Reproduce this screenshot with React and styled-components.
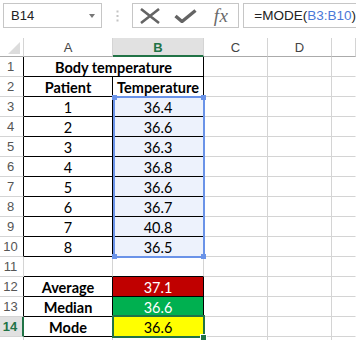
import React from "react";
import styled, { createGlobalStyle } from "styled-components";

const GlobalStyle = createGlobalStyle`
  html, body {
    margin: 0;
    padding: 0;
    background: #ffffff;
    overflow: hidden;
  }
  body {
    font-family: "Liberation Sans", Arial, sans-serif;
  }
`;

const GRID = "#d4d4d4";
const GREEN = "#217346";
const BLUE = "#6a93e8";

const Page = styled.div`
  width: 356px;
  height: 340px;
  overflow: hidden;
  background: #fff;
`;

const Toolbar = styled.div`
  height: 38px;
  display: flex;
  align-items: flex-start;
  padding-top: 3px;
  box-sizing: border-box;
`;

const NameBox = styled.div`
  margin-left: 3px;
  width: 102px;
  height: 25px;
  box-sizing: border-box;
  border: 1px solid #c6c6c6;
  display: flex;
  align-items: center;
  justify-content: space-between;
  padding: 0 6px 0 7px;
  font-size: 13px;
  color: #222;
`;

const Arrow = styled.span`
  width: 0;
  height: 0;
  border-left: 3.5px solid transparent;
  border-right: 3.5px solid transparent;
  border-top: 4px solid #777;
`;

const Dots = styled.div`
  width: 31px;
  height: 25px;
  display: flex;
  align-items: center;
  justify-content: center;
`;

const IconBox = styled.div`
  width: 111px;
  height: 25px;
  box-sizing: border-box;
  border: 1px solid #c6c6c6;
  display: flex;
  align-items: center;
`;

const IconSlot = styled.div`
  width: ${(p) => p.$w}px;
  height: 23px;
  display: flex;
  align-items: center;
  justify-content: center;
`;

const Fx = styled.span`
  font-family: "Liberation Serif", "Times New Roman", serif;
  font-style: italic;
  font-size: 19px;
  color: #6a6a6a;
  letter-spacing: 0.5px;
`;

const FormulaBox = styled.div`
  margin-left: 4px;
  flex: 1;
  height: 25px;
  box-sizing: border-box;
  border: 1px solid #c6c6c6;
  border-right: none;
  display: flex;
  align-items: center;
  padding-left: 10px;
  font-size: 13.5px;
  color: #222;
  white-space: nowrap;
`;

const Ref = styled.span`
  color: #4a78d8;
`;

const Sheet = styled.div`
  display: grid;
  grid-template-columns: 24px 89px 91px 64px 64px 1fr;
  grid-template-rows: 19px repeat(15, 20px);
  font-family: Lato, "Liberation Sans", sans-serif;
`;

const Corner = styled.div`
  grid-row: 1;
  grid-column: 1;
  border-right: 1px solid ${GRID};
  border-bottom: 1px solid #ababab;
  position: relative;
  &::after {
    content: "";
    position: absolute;
    right: 3px;
    bottom: 2px;
    width: 0;
    height: 0;
    border-left: 12px solid transparent;
    border-bottom: 12px solid #dcdcdc;
  }
`;

const ColHead = styled.div`
  grid-row: 1;
  grid-column: ${(p) => p.$c};
  box-sizing: border-box;
  border-right: 1px solid ${GRID};
  border-bottom: ${(p) => (p.$active ? `2px solid ${GREEN}` : "1px solid #ababab")};
  background: ${(p) => (p.$active ? "#e1e1e1" : "#fff")};
  color: ${(p) => (p.$active ? GREEN : "#444")};
  font-family: "Liberation Sans", Arial, sans-serif;
  font-weight: ${(p) => (p.$active ? 700 : 400)};
  font-size: 13px;
  display: flex;
  align-items: center;
  justify-content: center;
  padding-top: ${(p) => (p.$active ? "1px" : "0")};
`;

const RowHead = styled.div`
  grid-row: ${(p) => p.$r};
  grid-column: 1;
  box-sizing: border-box;
  border-right: ${(p) => (p.$active ? `2px solid ${GREEN}` : `1px solid ${p.$edge}`)};
  border-bottom: 1px solid ${GRID};
  background: ${(p) => (p.$active ? "#e1e1e1" : "#fff")};
  color: ${(p) => (p.$active ? GREEN : "#555")};
  font-family: "Liberation Sans", Arial, sans-serif;
  font-weight: ${(p) => (p.$active ? 700 : 400)};
  font-size: 13px;
  display: flex;
  align-items: center;
  justify-content: center;
  padding-right: 2px;
`;

const Cell = styled.div`
  grid-row: ${(p) => p.$r};
  grid-column: ${(p) => (p.$span ? `${p.$c} / span ${p.$span}` : p.$c)};
  box-sizing: border-box;
  border-right: 1px solid ${(p) => p.$right || GRID};
  border-bottom: 1px solid ${(p) => p.$bottom || GRID};
  background: ${(p) => p.$bg || "#fff"};
  color: ${(p) => p.$color || "#000"};
  font-weight: ${(p) => (p.$bold ? 700 : 400)};
  font-size: 14.5px;
  display: flex;
  align-items: center;
  justify-content: center;
  white-space: nowrap;
  overflow: hidden;
  padding-top: 1px;
`;

const Selection = styled.div`
  grid-column: 3;
  grid-row: 4 / 12;
  margin: -1px -1px -1px 0;
  border: 2px solid ${BLUE};
  box-sizing: border-box;
  position: relative;
  pointer-events: none;
`;

const Handle = styled.span`
  position: absolute;
  width: 5px;
  height: 5px;
  background: ${BLUE};
  ${(p) => (p.$top ? "top: -3px;" : "bottom: -3px;")}
  ${(p) => (p.$left ? "left: -3px;" : "right: -3px;")}
`;

const ActiveCell = styled.div`
  grid-column: 3;
  grid-row: 15;
  margin: -2px -1px -1px -1px;
  border: 2px solid ${GREEN};
  box-sizing: border-box;
  position: relative;
  pointer-events: none;
`;

const FillHandle = styled.span`
  position: absolute;
  right: -4px;
  bottom: -5px;
  width: 5px;
  height: 5px;
  background: ${GREEN};
  border: 1px solid #fff;
`;

const data = [
  { n: 1, merged: "Body temperature" },
  { n: 2, a: "Patient", b: "Temperature", bold: true },
  { n: 3, a: "1", b: "36.4", sel: true },
  { n: 4, a: "2", b: "36.6", sel: true },
  { n: 5, a: "3", b: "36.3", sel: true },
  { n: 6, a: "4", b: "36.8", sel: true },
  { n: 7, a: "5", b: "36.6", sel: true },
  { n: 8, a: "6", b: "36.7", sel: true },
  { n: 9, a: "7", b: "40.8", sel: true },
  { n: 10, a: "8", b: "36.5", sel: true },
  { n: 11, blank: true },
  { n: 12, a: "Average", b: "37.1", bold: true, fill: "#c00000", color: "#fff" },
  { n: 13, a: "Median", b: "36.6", bold: true, fill: "#00b050", color: "#fff" },
  { n: 14, a: "Mode", b: "36.6", bold: true, fill: "#ffff00", active: true },
  { n: 15, blank: true, outside: true },
];

function Row({ row }) {
  const r = row.n + 1;
  const edge = row.blank ? GRID : "#000";
  const rest = [
    <Cell key="c" $r={r} $c={4} />,
    <Cell key="d" $r={r} $c={5} />,
    <Cell key="e" $r={r} $c={6} $right="transparent" />,
  ];
  // row 15 is cut off by the window edge, only its top lines show
  const head = (
    <RowHead $r={r} $edge={edge} $active={row.active}>
      {row.outside ? null : row.n}
    </RowHead>
  );

  if (row.merged) {
    return (
      <>
        {head}
        <Cell $r={r} $c={2} $span={2} $bold $right="#000" $bottom="#000">
          {row.merged}
        </Cell>
        {rest}
      </>
    );
  }

  if (row.blank) {
    const bottom = row.outside ? GRID : "#000";
    return (
      <>
        {head}
        <Cell $r={r} $c={2} $bottom={bottom} />
        <Cell $r={r} $c={3} $bottom={bottom} />
        {rest}
      </>
    );
  }

  return (
    <>
      {head}
      <Cell $r={r} $c={2} $bold={row.bold} $right="#000" $bottom="#000">
        {row.a}
      </Cell>
      <Cell
        $r={r}
        $c={3}
        $bold={row.bold && !row.fill}
        $right="#000"
        $bottom="#000"
        $bg={row.sel ? "#edf2fc" : row.fill}
        $color={row.color}
      >
        {row.b}
      </Cell>
      {rest}
    </>
  );
}

export default function App() {
  return (
    <Page>
      <GlobalStyle />
      <Toolbar>
        <NameBox>
          B14
          <Arrow />
        </NameBox>
        <Dots>
          <svg width="3" height="12" viewBox="0 0 3 12">
            <rect x="0.5" y="0.5" width="2" height="2" fill="#c4c4c4" />
            <rect x="0.5" y="5" width="2" height="2" fill="#c4c4c4" />
            <rect x="0.5" y="9.5" width="2" height="2" fill="#c4c4c4" />
          </svg>
        </Dots>
        <IconBox>
          <IconSlot $w={33}>
            <svg width="22" height="16" viewBox="0 0 22 16">
              <path d="M2 1 L20 15 M20 1 L2 15" stroke="#646464" strokeWidth="2.6" fill="none" />
            </svg>
          </IconSlot>
          <IconSlot $w={38}>
            <svg width="23" height="14" viewBox="0 0 23 14">
              <path d="M1.5 7 L8 12.5 L21.5 1.5" stroke="#646464" strokeWidth="3.4" fill="none" />
            </svg>
          </IconSlot>
          <IconSlot $w={34}>
            <Fx>fx</Fx>
          </IconSlot>
        </IconBox>
        <FormulaBox>
          =MODE(<Ref>B3:B10</Ref>)
        </FormulaBox>
      </Toolbar>
      <Sheet>
        <Corner />
        <ColHead $c={2}>A</ColHead>
        <ColHead $c={3} $active>B</ColHead>
        <ColHead $c={4}>C</ColHead>
        <ColHead $c={5}>D</ColHead>
        <ColHead $c={6} />
        {data.map((row) => (
          <Row key={row.n} row={row} />
        ))}
        <Selection>
          <Handle $top $left />
          <Handle $top />
          <Handle $left />
          <Handle />
        </Selection>
        <ActiveCell>
          <FillHandle />
        </ActiveCell>
      </Sheet>
    </Page>
  );
}
